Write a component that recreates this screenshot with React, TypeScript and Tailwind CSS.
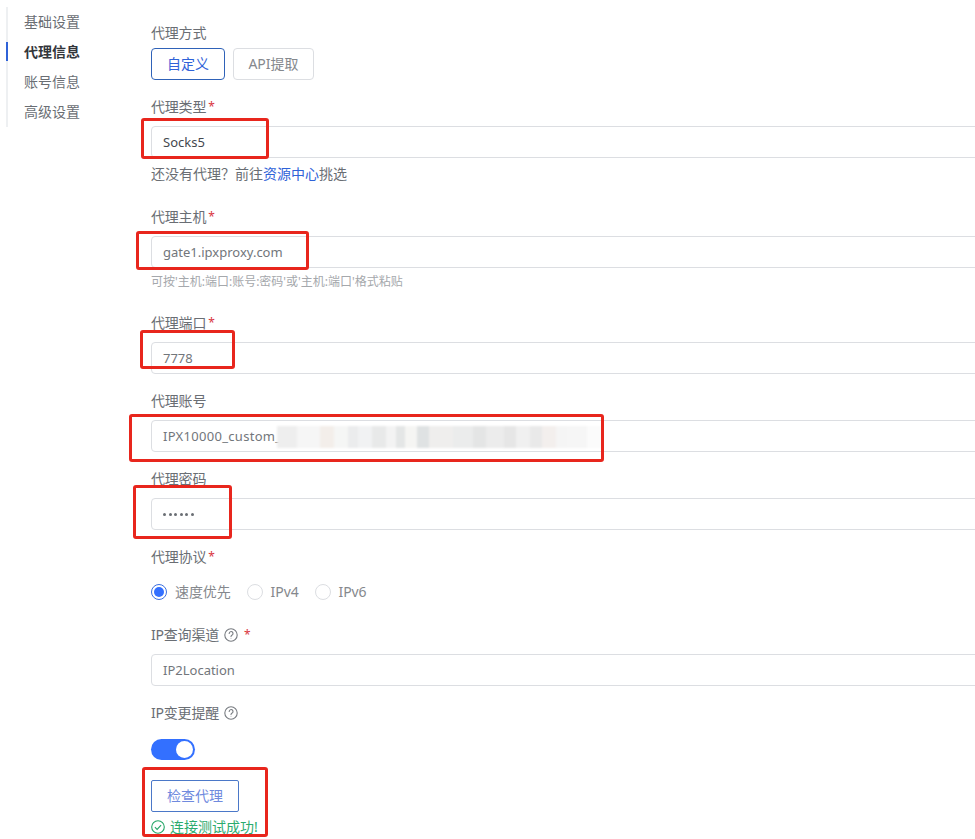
function Label({ text, req, help, className = "" }: { text: string; req?: boolean; help?: boolean; className?: string }) {
  return (
    <div className={`flex h-5 items-center text-sm leading-5 text-[#6a6e74] ${className}`}>
      <span className="tracking-[-0.2px]">{text}</span>
      {help && <HelpIcon />}
      {req && <span className={`text-xs text-[#d9363e] ${help ? "ml-1.5" : "ml-0.5"}`}>*</span>}
    </div>
  );
}

function HelpIcon() {
  return (
    <svg className="ml-[5px]" width="14" height="14" viewBox="0 0 14 14" fill="none" stroke="#777b80" strokeWidth="1.1">
      <circle cx="7" cy="7" r="6.2" />
      <path d="M5.2 5.5a1.9 1.9 0 1 1 2.9 1.6c-.7.4-1.1.8-1.1 1.5" strokeLinecap="round" />
      <circle cx="7" cy="10.4" r=".45" fill="#777b80" stroke="none" />
    </svg>
  );
}

function Field({ value, dark, children }: { value?: string; dark?: boolean; children?: React.ReactNode }) {
  return (
    <div className={`relative flex h-8 w-[900px] items-center rounded-[4px] border border-[#dcdee2] bg-white pl-[11px] pt-px text-[13px] ${dark ? "text-[#44484e]" : "text-[#72767b]"}`}>
      {value}
      {children}
    </div>
  );
}

function Radio({ label, on }: { label: string; on?: boolean }) {
  return (
    <div className="flex items-center gap-2 text-sm text-[#85888d]">
      {on ? (
        <span className="flex h-4 w-4 items-center justify-center rounded-full border border-[#3b6fe0]">
          <span className="h-2.5 w-2.5 rounded-full bg-[#3370ff]" />
        </span>
      ) : (
        <span className="h-4 w-4 rounded-full border border-[#dcdee2]" />
      )}
      <span className="tracking-[-0.1px]">{label}</span>
    </div>
  );
}

function Box({ className }: { className: string }) {
  return <div className={`pointer-events-none absolute rounded-[3px] border-[3px] border-[#e8261d] ${className}`} />;
}

export default function App() {
  const patches = [
    "w-[20px] bg-[#eeeeee]", "w-[24px] bg-[#f6f6f6]", "w-[14px] bg-[#f3eeea]", "w-[14px] bg-[#f5f6f5]",
    "w-[10px] bg-[#ebeced]", "w-[14px] bg-[#f1f2f3]", "w-[14px] bg-[#e8e9e9]", "w-[10px] bg-[#f3f3f3]",
    "w-[10px] bg-[#e4e6e6]", "w-[12px] bg-[#f5f5f3]", "w-[12px] bg-[#dfe2e3]", "w-[24px] bg-[#efeeed]",
    "w-[20px] bg-[#ebecec]", "w-[14px] bg-[#e4e5e5]", "w-[18px] bg-[#ececec]", "w-[12px] bg-[#e6e6e6]",
    "w-[14px] bg-[#f0f0f0]", "w-[12px] bg-[#e9e9e9]", "w-[14px] bg-[#f3efed]", "w-[12px] bg-[#f5f5f5]",
    "w-[20px] bg-[#f6f6f6]", "w-[15px] bg-[#fbfbfb]",
  ];
  return (
    <div className="relative flex h-[839px] w-[975px] overflow-hidden bg-white font-['Noto_Sans','Noto_Sans_CJK_SC',sans-serif]">
      <nav className="ml-1.5 mt-[7px] h-[120px] w-[145px] shrink-0 border-l-2 border-[#eef0f2] text-sm leading-[30px] text-[#6a6e74]">
        <div className="h-[30px] pl-4">基础设置</div>
        <div className="relative -ml-0.5 h-[30px] border-l-2 border-transparent pl-4 font-bold text-[#33363b]">
          <span className="absolute -left-0.5 top-[5px] h-[19px] w-0.5 bg-[#2f62d8]" />
          代理信息
        </div>
        <div className="h-[30px] pl-4">账号信息</div>
        <div className="h-[30px] pl-4">高级设置</div>
      </nav>

      <main className="shrink-0 pt-[23px]">
        <Label text="代理方式" />
        <div className="mt-[5px] flex gap-2">
          <div className="flex h-8 w-[74px] items-center justify-center rounded-[4px] border border-[#2f62b8] text-sm text-[#2f62d8]">自定义</div>
          <div className="flex h-8 w-[81px] items-center justify-center rounded-[4px] border border-[#dcdee2] text-sm text-[#85888d]">API提取</div>
        </div>

        <Label text="代理类型" req className="mt-[17px]" />
        <div className="mt-[9px]"><Field value="Socks5" dark /></div>
        <div className="mt-1.5 h-5 text-sm leading-5 text-[#6a6e74]">
          还没有代理？前往<span className="text-[#2f62d8]">资源中心</span>挑选
        </div>

        <Label text="代理主机" req className="mt-[23px]" />
        <div className="mt-[9px]"><Field value="gate1.ipxproxy.com" /></div>
        <div className="mt-[5px] h-[18px] text-xs leading-[18px] text-[#a5a8ac]">可按'主机:端口:账号:密码'或'主机:端口'格式粘贴</div>

        <Label text="代理端口" req className="mt-[22px]" />
        <div className="mt-[9px]"><Field value="7778" /></div>

        <Label text="代理账号" className="mt-[17px]" />
        <div className="mt-[9px]">
          <Field>
            <span className="relative z-0 tracking-[0.3px]">IPX10000_custom_</span>
            <div className="absolute left-[125px] top-[5px] flex h-[22px] w-[325px] blur-[1px]">
              {patches.map((p, i) => (
                <span key={i} className={`block h-full ${p}`} />
              ))}
            </div>
          </Field>
        </div>

        <Label text="代理密码" className="mt-[17px]" />
        <div className="mt-[9px]">
          <Field>
            <span className="flex gap-[2.5px]">
              {[0, 1, 2, 3, 4, 5].map((i) => (
                <span key={i} className="block h-[3px] w-[3px] rounded-full bg-[#6a6e74]" />
              ))}
            </span>
          </Field>
        </div>

        <Label text="代理协议" req className="mt-[17px]" />
        <div className="mt-[15px] flex h-5 items-center gap-4">
          <Radio label="速度优先" on />
          <Radio label="IPv4" />
          <Radio label="IPv6" />
        </div>

        <Label text="IP查询渠道" req help className="mt-[23px]" />
        <div className="mt-[9px]"><Field value="IP2Location" /></div>

        <Label text="IP变更提醒" help className="mt-[17px]" />
        <div className="mt-4 flex h-[21px] w-11 items-center justify-end rounded-full bg-[#3370ff] pr-[2px]">
          <span className="h-[17px] w-[17px] rounded-full bg-white" />
        </div>

        <div className="mt-[20px] flex h-8 w-[88px] items-center justify-center rounded-[2px] border border-[#4b78c8] text-sm text-[#6f8ade]">检查代理</div>
        <div className="mt-[5px] flex h-5 items-center gap-[5px] text-sm text-[#2bab6e]">
          <svg width="14" height="14" viewBox="0 0 14 14" fill="none" stroke="#22a566" strokeWidth="1.1">
            <circle cx="7" cy="7" r="6.3" />
            <path d="M3.9 7.2l2.2 2.2 4-4.2" />
          </svg>
          <span>连接测试成功!</span>
        </div>
      </main>

      <Box className="left-[141px] top-[118px] h-[41px] w-[128px]" />
      <Box className="left-[136px] top-[231px] h-[39px] w-[173px]" />
      <Box className="left-[140px] top-[330px] h-[39px] w-[95px]" />
      <Box className="left-[129px] top-[414px] h-[48px] w-[475px]" />
      <Box className="left-[133px] top-[485px] h-[54px] w-[99px]" />
      <Box className="left-[142px] top-[767px] h-[70px] w-[126px]" />
    </div>
  );
}
